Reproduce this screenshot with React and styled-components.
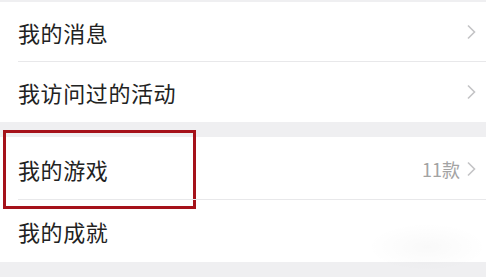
import React from 'react';
import styled, { createGlobalStyle } from 'styled-components';

const GlobalStyle = createGlobalStyle`
  html, body {
    margin: 0;
    padding: 0;
    background: #f2f2f2;
    font-family: 'Noto Sans CJK SC', 'Liberation Sans', sans-serif;
  }
`;

const Page = styled.div`
  width: 486px;
  height: 277px;
  overflow: hidden;
  background: #efeff1;
  padding-top: 2px;
  box-sizing: border-box;
  position: relative;
`;

const Group = styled.div`
  background: #fff;
  margin-bottom: ${({ gap }) => gap || 0}px;
`;

const Row = styled.div`
  position: relative;
  display: flex;
  align-items: center;
  height: ${({ h }) => h || 60}px;
  padding: 0 10px 0 18px;
  box-sizing: border-box;
  &::after {
    content: '';
    display: ${({ last }) => (last ? 'none' : 'block')};
    position: absolute;
    left: 18px;
    right: 0;
    bottom: 0;
    height: 1px;
    background: #e8e8ea;
  }
`;

const Label = styled.span`
  flex: 1;
  font-size: 22px;
  color: #222;
  letter-spacing: 0.6px;
`;

const Value = styled.span`
  font-size: 18px;
  color: #a3a3a3;
  margin-right: 6px;
`;

const Chevron = () => (
  <svg width="10" height="16" viewBox="0 0 10 16">
    <path d="M2 1.5 L8.5 8 L2 14.5" fill="none" stroke="#c4c4c6" strokeWidth="1.6" />
  </svg>
);

const Highlight = styled.div`
  position: absolute;
  left: 3px;
  top: -7px;
  width: 193px;
  height: 79px;
  border: 3px solid #a5121a;
  box-sizing: border-box;
  pointer-events: none;
`;

const Smudge = styled.div`
  position: absolute;
  right: 0;
  bottom: 0;
  width: 154px;
  height: 82px;
  background: radial-gradient(ellipse 60px 24px at 95px 52px, rgba(0, 0, 0, 0.025), rgba(0, 0, 0, 0));
  pointer-events: none;
`;

export default function App() {
  return (
    <>
      <GlobalStyle />
      <Page>
        <Group gap={15}>
          <Row h={60}>
            <Label>我的消息</Label>
            <Chevron />
          </Row>
          <Row h={60} last>
            <Label>我访问过的活动</Label>
            <Chevron />
          </Row>
        </Group>
        <Group>
          <Row h={63}>
            <Highlight />
            <Label>我的游戏</Label>
            <Value>11款</Value>
            <Chevron />
          </Row>
          <Row h={62} last>
            <Label>我的成就</Label>
          </Row>
        </Group>
        <Smudge />
      </Page>
    </>
  );
}
